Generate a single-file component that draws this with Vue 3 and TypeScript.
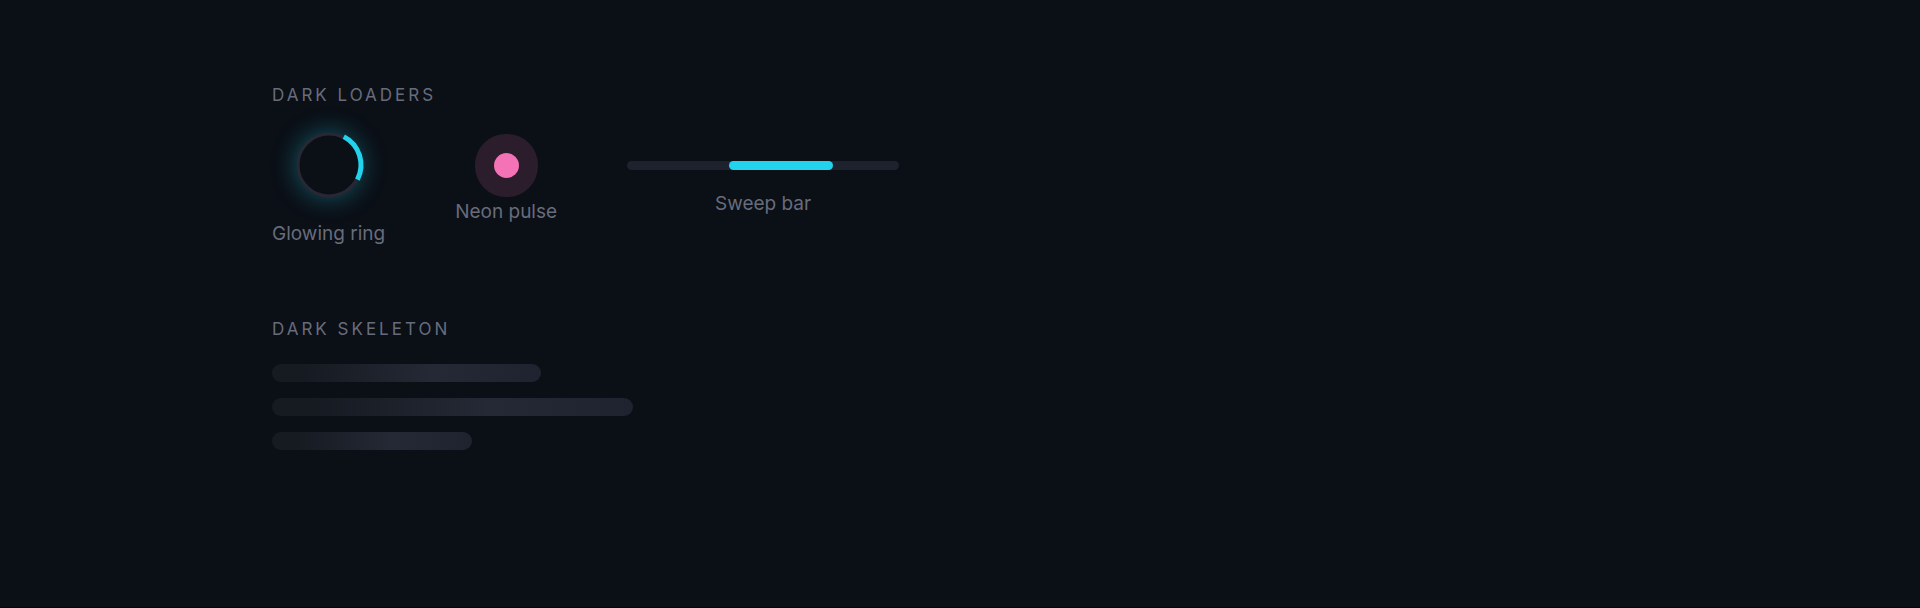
<script setup lang="ts">
interface Skeleton {
  id: string
  width: number
}

const skeletons: Skeleton[] = [
  { id: 'medium', width: 269 },
  { id: 'long', width: 361 },
  { id: 'short', width: 200 },
]
</script>

<template>
  <main class="page">
    <section class="group">
      <h2 class="title">Dark loaders</h2>
      <div class="loaders">
        <figure class="loader">
          <svg class="ring" viewBox="1 1 64 64" aria-hidden="true">
            <circle class="ring-track" cx="33" cy="33" r="31" />
            <path class="ring-arc" d="M47.8 4.6 A32 32 0 0 1 61.4 47.7" />
          </svg>
          <figcaption class="label">Glowing ring</figcaption>
        </figure>
        <figure class="loader">
          <div class="pulse"></div>
          <figcaption class="label">Neon pulse</figcaption>
        </figure>
        <figure class="loader">
          <div class="sweep"><div class="sweep-fill"></div></div>
          <figcaption class="label">Sweep bar</figcaption>
        </figure>
      </div>
    </section>
    <section class="group">
      <h2 class="title">Dark skeleton</h2>
      <div class="skeletons">
        <div
          v-for="bar in skeletons"
          :key="bar.id"
          class="skeleton"
          :style="{ width: `${bar.width}px` }"
        ></div>
      </div>
    </section>
  </main>
</template>

<style>
body {
  margin: 0;
  background: #0b0f16;
}
</style>

<style scoped>
.page {
  box-sizing: border-box;
  min-height: 100vh;
  padding: 83px 272px;
  display: flex;
  flex-direction: column;
  gap: 70px;
  background: #0b0f16;
  border-bottom: 1px solid #06060c;
  color: #676c7c;
  font-family: Inter, "Liberation Sans", sans-serif;
}
.title {
  margin: 0;
  font-size: 17px;
  line-height: 24px;
  font-weight: 400;
  letter-spacing: 3px;
  text-transform: uppercase;
}
.loaders {
  display: flex;
  flex-wrap: wrap;
  align-items: center;
  gap: 70px;
  margin-top: 23px;
}
.loader {
  margin: 0;
  display: flex;
  flex-direction: column;
  align-items: center;
  gap: 20px;
}
.label {
  font-size: 19px;
  line-height: 27px;
}
.ring {
  width: 64px;
  height: 64px;
  margin: 3px;
  border-radius: 50%;
  overflow: visible;
  box-shadow: 0 0 26px rgba(34, 211, 238, 0.4);
}
.ring-track {
  fill: none;
  stroke: #272833;
  stroke-width: 3;
}
.ring-arc {
  fill: none;
  stroke: #22d3ee;
  stroke-width: 5;
}
.pulse {
  width: 25px;
  height: 25px;
  border-radius: 50%;
  background: #f472b6;
  box-shadow: 0 0 0 19px #2b1d2b;
}
.sweep {
  width: 272px;
  height: 9px;
  border-radius: 5px;
  background: #1d222e;
  overflow: hidden;
}
.sweep-fill {
  width: 104px;
  height: 100%;
  margin-left: 102px;
  border-radius: 5px;
  background: #22d3ee;
}
.skeletons {
  display: flex;
  flex-direction: column;
  gap: 16px;
  margin-top: 23px;
}
.skeleton {
  height: 18px;
  border-radius: 9px;
  background: linear-gradient(90deg, #161a21 0%, #161a21 12%, #252935 60%, #1e232f 100%);
}
</style>
